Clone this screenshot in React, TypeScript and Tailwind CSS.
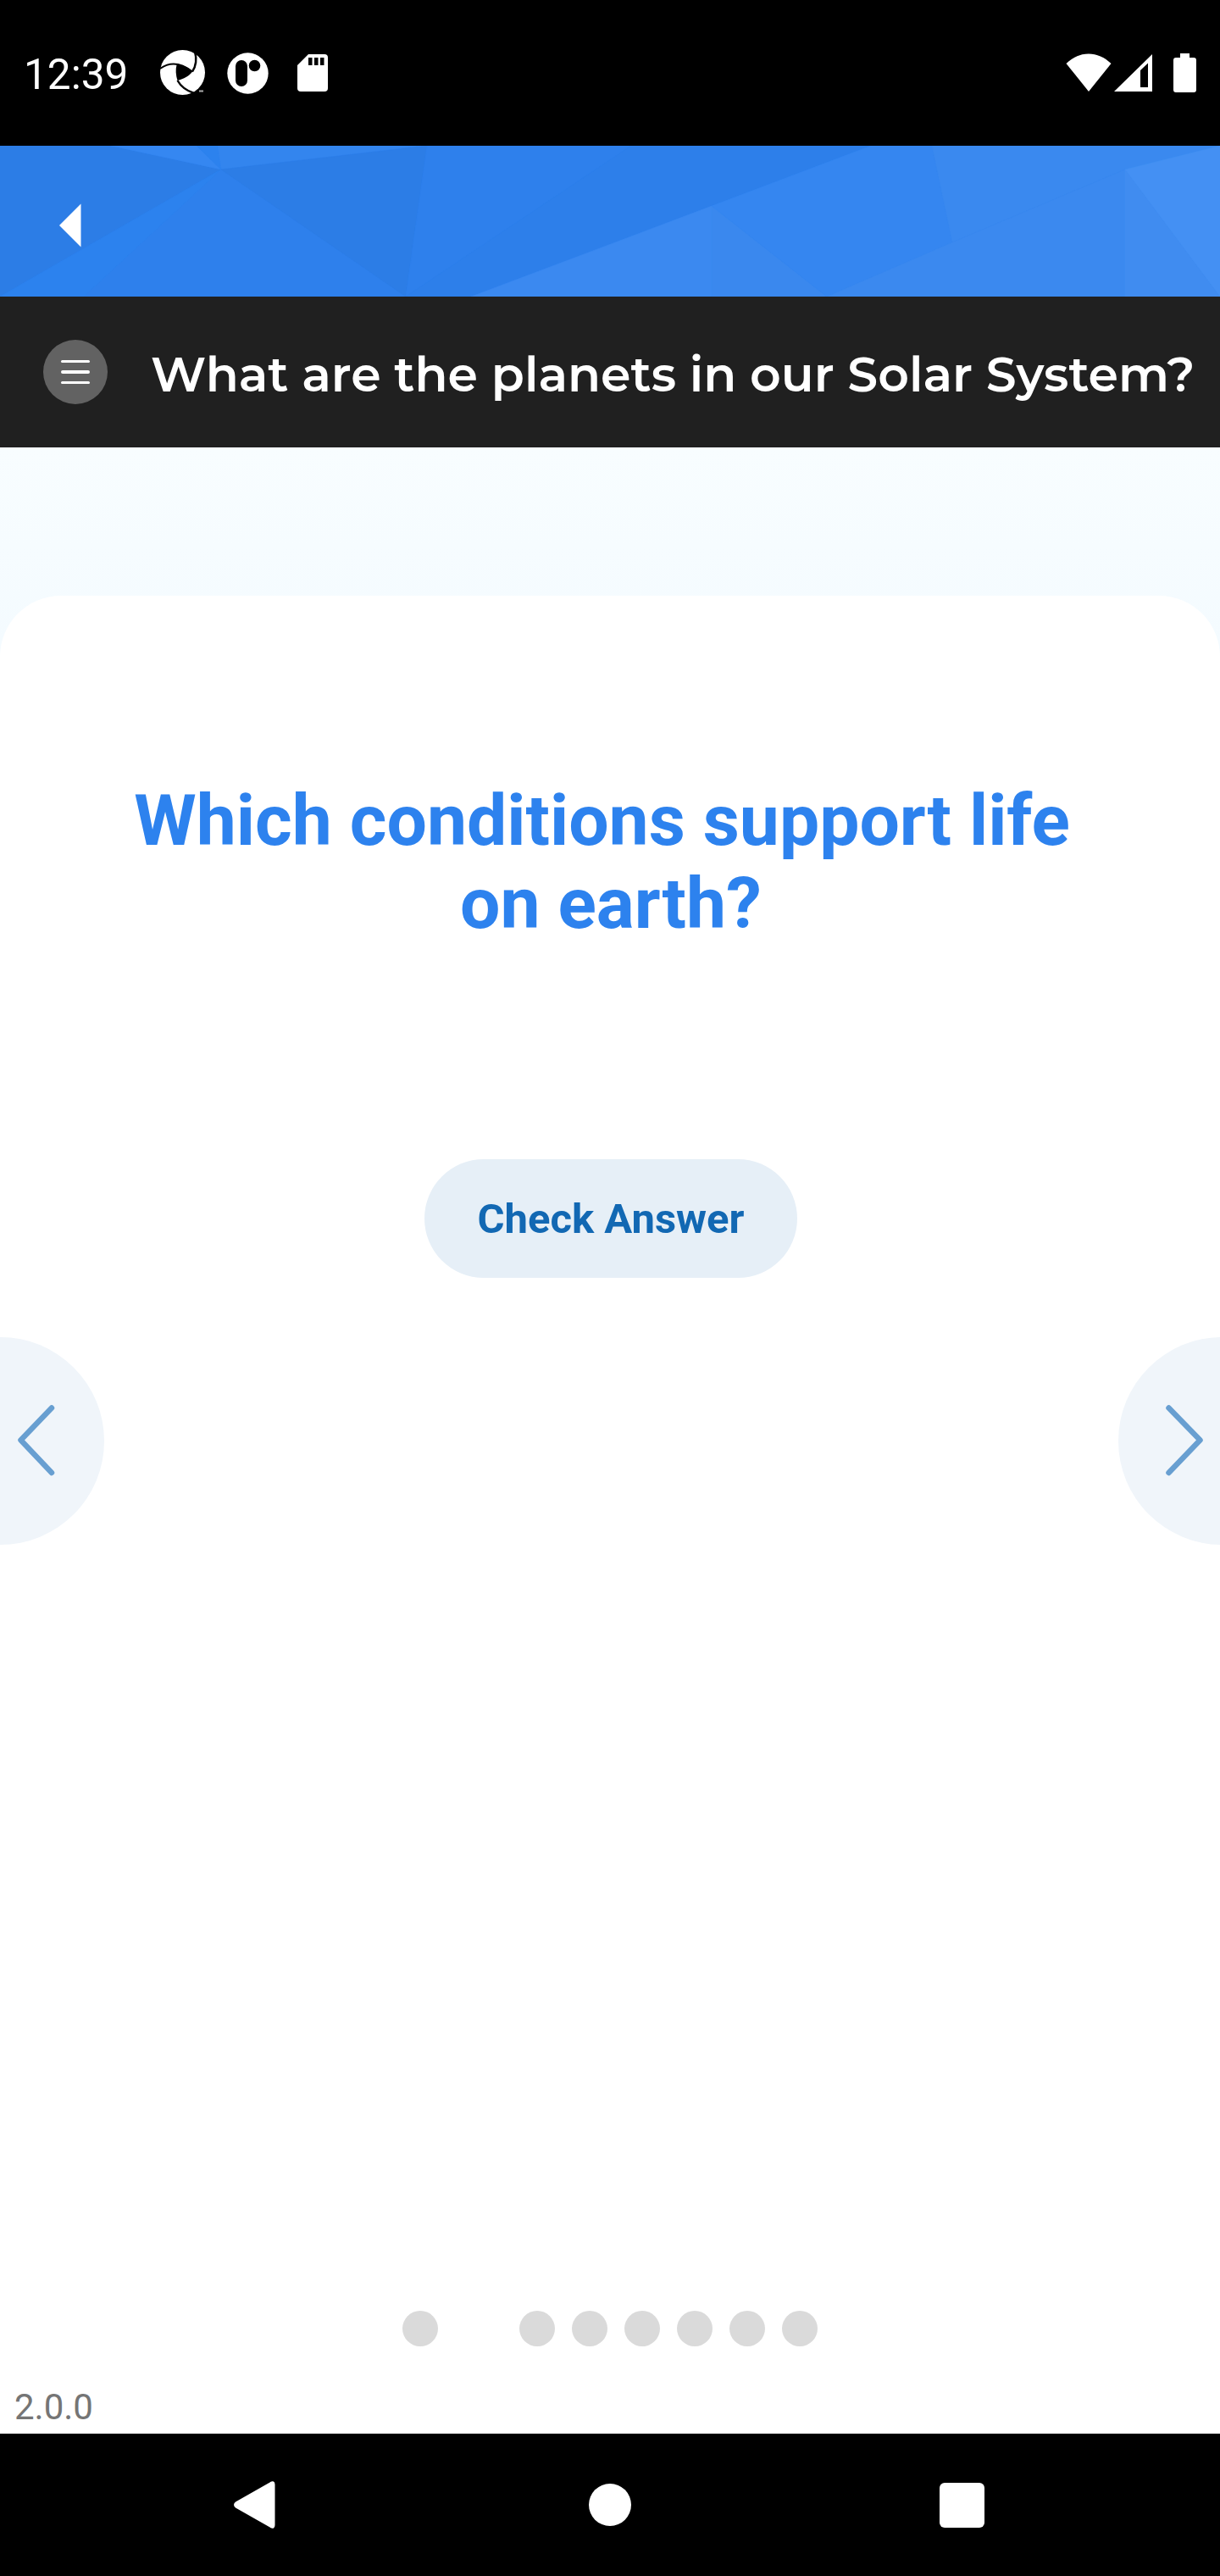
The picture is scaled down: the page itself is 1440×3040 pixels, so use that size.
const HEADER_FACETS = [
  { points: '0,0 131,0 261,28 0,178', fill: '#2c7de6' },
  { points: '131,0 232,0 261,28', fill: '#3587f1' },
  { points: '232,0 257,0 261,28', fill: '#2c82ee' },
  { points: '257,0 504,0 261,28', fill: '#3385ee' },
  { points: '261,28 0,178 99,178', fill: '#2c82ee' },
  { points: '261,28 99,178 479,178', fill: '#2e80ec' },
  { points: '261,28 504,0 479,178', fill: '#2c7de6' },
  { points: '504,0 745,0 479,178', fill: '#2e80ec' },
  { points: '745,0 1028,0 556,178 479,178', fill: '#2d7fea' },
  { points: '840,71 840,178 556,178', fill: '#3b89f0' },
  { points: '840,71 976,178 840,178', fill: '#3a88ee' },
  { points: '840,71 1028,0 1100,0 1124,114 976,178', fill: '#3586f0' },
  { points: '1100,0 1440,0 1328,28 1124,114', fill: '#3a89ef' },
  { points: '1328,28 1328,178 976,178 1124,114', fill: '#3b89ef' },
  { points: '1328,28 1440,178 1328,178', fill: '#408cf0' },
  { points: '1328,28 1440,0 1440,178', fill: '#4490f3' },
];

const LATER_DOTS = [3, 4, 5, 6, 7, 8];

function StatusBar() {
  return (
    <div className="flex h-[172px] items-center justify-between bg-black pl-7 pr-7 text-white">
      <div className="flex items-center">
        <span className="w-[161px] pt-[3px] text-[49.500px] leading-[60px]">12:39</span>
        <svg width="54" height="54" viewBox="0 0 54 54" className="block">
          <circle cx="26.5" cy="26.5" r="26.5" fill="#fff" />
          <path d="M19.5 17.5C26 17 33 20 38 25.5C34 31 28 34 20.5 36C18.5 30 18 23.5 19.5 17.5Z" fill="#000" />
          <path d="M0 22C9 15.5 22 13 38 25.5" fill="none" stroke="#000" strokeWidth="2" />
          <path d="M41 2C43.5 11 43 18 38 25.5" fill="none" stroke="#000" strokeWidth="2.4" />
          <path d="M20.5 36C25 44 31 48 40 51" fill="none" stroke="#000" strokeWidth="2.4" />
          <path d="M46 47.5h5v2h-5z" fill="#aaa" />
        </svg>
        <svg width="49" height="49" viewBox="0 0 49 49" className="ml-[25px] block">
          <circle cx="24.5" cy="24.5" r="24.2" fill="#fff" />
          <rect x="10" y="9" width="14" height="31" rx="7" fill="#000" />
          <circle cx="32.5" cy="15.5" r="6.8" fill="#000" />
        </svg>
        <svg width="36" height="46" viewBox="0 0 36 46" className="ml-[34px] block">
          <path d="M13 1H32a4 4 0 0 1 4 4V41a4 4 0 0 1-4 4H4a4 4 0 0 1-4-4V14Z" fill="#fff" />
          <path d="M13 5h4.500v9H13zM20 5h4.500v9H20zM27 5h4.500v9H27z" fill="#000" />
        </svg>
      </div>
      <div className="flex items-center">
        <svg width="54" height="46" viewBox="0 0 54 46" className="block">
          <path d="M0.500 12C16 -3.500 38 -3.500 53.500 12L27 45Z" fill="#fff" />
        </svg>
        <svg width="45" height="46" viewBox="0 0 45 46" className="ml-[3px] block">
          <path fillRule="evenodd" d="M0 45L45 1V45ZM31 20V40H40V11.500Z" fill="#fff" />
        </svg>
        <svg width="27" height="46" viewBox="0 0 27 46" className="ml-[25px] block">
          <path d="M8 0H19V5H24a3 3 0 0 1 3 3V43a3 3 0 0 1-3 3H3a3 3 0 0 1-3-3V8a3 3 0 0 1 3-3H8Z" fill="#fff" />
        </svg>
      </div>
    </div>
  );
}

function Header() {
  return (
    <header className="relative flex h-[178px] items-center overflow-hidden bg-[#2e80ec] pl-[70px]">
      <svg
        width="1440"
        height="178"
        viewBox="0 0 1440 178"
        className="absolute inset-0 block"
        shapeRendering="geometricPrecision"
      >
        {HEADER_FACETS.map((f) => (
          <polygon key={f.points} points={f.points} fill={f.fill} stroke={f.fill} strokeWidth="0.5" />
        ))}
      </svg>
      <button aria-label="Back" className="relative mt-[10px]">
        <svg width="26" height="52" viewBox="0 0 26 52" className="block">
          <path d="M0 26L25.500 0.500V51.500Z" fill="#fff" />
        </svg>
      </button>
    </header>
  );
}

function TitleBar() {
  return (
    <div className="flex h-[178px] items-center bg-[#202020] pl-[51px]">
      <button aria-label="Menu" className="flex size-[76px] shrink-0 items-center justify-center rounded-full bg-[#626262]">
        <span className="flex w-[34px] flex-col gap-[9px]">
          <span className="h-[3.500px] rounded-full bg-white" />
          <span className="h-[3.500px] rounded-full bg-white" />
          <span className="h-[3.500px] rounded-full bg-white" />
        </span>
      </button>
      <h1 className="ml-[51px] whitespace-nowrap pt-[5px] font-['Montserrat',Inter,sans-serif] text-[57px] font-semibold leading-[68px] text-white">
        What are the planets in our Solar System?
      </h1>
    </div>
  );
}

function SideButton({ side }: { side: 'left' | 'right' }) {
  const left = side === 'left';
  return (
    <button
      aria-label={left ? 'Previous' : 'Next'}
      className={left ? 'h-[245px] w-[123px] overflow-hidden' : 'h-[245px] w-[120px] overflow-hidden'}
    >
      <svg width="123" height="245" viewBox="0 0 123 245" className="block">
        <circle cx={left ? 0.5 : 122.5} cy="122.500" r="122.500" fill="#f0f5fa" />
        <path
          d={left ? 'M61 83.500L24.500 121.500L61 160' : 'M59.500 83.500L96.500 121.500L59.500 160'}
          fill="none"
          stroke="#689fd1"
          strokeWidth="6.500"
          strokeLinecap="round"
          strokeLinejoin="round"
        />
      </svg>
    </button>
  );
}

function NavBar() {
  return (
    <nav className="grid h-[168px] grid-cols-[600px_240px_600px] items-center justify-items-center bg-black">
      <svg width="50" height="58" viewBox="0 0 50 58" className="block">
        <path d="M4 26L44.500 3Q48.500 1 48.500 5V53Q48.500 57 44.500 55L4 32Q0 29 4 26Z" fill="#fff" stroke="#fff" strokeWidth="2" strokeLinejoin="round" />
      </svg>
      <div className="size-[50px] rounded-full bg-white" />
      <div className="mr-[9px] size-[53px] rounded-[6px] bg-white" />
    </nav>
  );
}

export default function App() {
  return (
    <div className="flex h-[3040px] w-[1440px] flex-col overflow-hidden bg-white font-[Roboto,sans-serif]">
      <StatusBar />
      <Header />
      <TitleBar />
      <main className="flex h-[2344px] flex-col bg-linear-to-b from-[#f8fdff] from-0% to-[#f4fbff] to-10% pt-[175px]">
        <section className="flex flex-1 flex-col rounded-t-[72px] bg-white pt-[217px]">
          <h2 className="ml-[131px] w-[1180px] text-center text-[84px] font-bold leading-[98px] text-[#2d82ee]">
            Which conditions support life{'\u00a0'}
            <br />
            on earth?
          </h2>
          <button className="ml-[501px] mt-[252px] h-[140px] w-[440px] rounded-full bg-[#e6eff7] pt-[2px] text-[49px] font-bold text-[#1268b3]">
            Check Answer
          </button>
          <div className="mt-[70px] flex justify-between">
            <SideButton side="left" />
            <SideButton side="right" />
          </div>
          <div className="mt-[904px] flex justify-center gap-5">
            <span className="size-[42px] rounded-full bg-[#dadada]" />
            <span className="h-[42px] w-[56px] rounded-full bg-white" />
            {LATER_DOTS.map((n) => (
              <span key={n} className="size-[42px] rounded-full bg-[#dadada]" />
            ))}
          </div>
          <p className="ml-[17px] mt-[47px] text-[42px] leading-[50px] text-[#757575]">2.0.0</p>
        </section>
      </main>
      <NavBar />
    </div>
  );
}
